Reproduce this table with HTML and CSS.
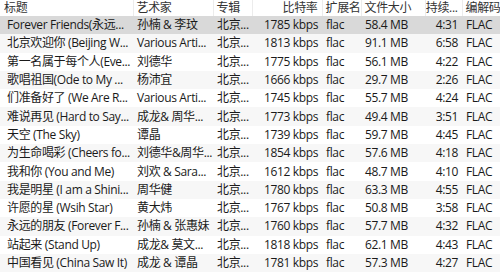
FILE: index.html
```html
<!DOCTYPE html>
<html lang="zh">
<head>
<meta charset="utf-8">
<title>列表</title>
<link rel="stylesheet" href="styles.css">
</head>
<body>
<table class="list">
  <colgroup>
    <col class="c-title"><col class="c-artist"><col class="c-album"><col class="c-rate"><col class="c-ext"><col class="c-size"><col class="c-dur"><col class="c-codec">
  </colgroup>
  <thead>
    <tr class="head">
      <th class="first">标题</th><th>艺术家</th><th>专辑</th><th class="num">比特率</th><th>扩展名</th><th>文件大小</th><th class="num">持续...</th><th>编解码</th>
    </tr>
  </thead>
  <tbody>
    <tr class="sel"><td class="first">Forever Friends(永远...</td><td>孙楠 &amp; 李玟</td><td>北京...</td><td class="num">1785 kbps</td><td>flac</td><td>58.4 MB</td><td class="num">4:31</td><td>FLAC</td></tr>
    <tr><td class="first">北京欢迎你 (Beijing W...</td><td>Various Arti...</td><td>北京...</td><td class="num">1813 kbps</td><td>flac</td><td>91.1 MB</td><td class="num">6:58</td><td>FLAC</td></tr>
    <tr><td class="first">第一名属于每个人(Eve...</td><td>刘德华</td><td>北京...</td><td class="num">1775 kbps</td><td>flac</td><td>56.1 MB</td><td class="num">4:22</td><td>FLAC</td></tr>
    <tr><td class="first">歌唱祖国(Ode to My ...</td><td>杨沛宜</td><td>北京...</td><td class="num">1666 kbps</td><td>flac</td><td>29.7 MB</td><td class="num">2:26</td><td>FLAC</td></tr>
    <tr><td class="first">们准备好了 (We Are R...</td><td>Various Arti...</td><td>北京...</td><td class="num">1745 kbps</td><td>flac</td><td>55.7 MB</td><td class="num">4:24</td><td>FLAC</td></tr>
    <tr><td class="first">难说再见 (Hard to Say...</td><td>成龙&amp; 周华...</td><td>北京...</td><td class="num">1773 kbps</td><td>flac</td><td>49.4 MB</td><td class="num">3:51</td><td>FLAC</td></tr>
    <tr><td class="first">天空 (The Sky)</td><td>谭晶</td><td>北京...</td><td class="num">1739 kbps</td><td>flac</td><td>59.7 MB</td><td class="num">4:45</td><td>FLAC</td></tr>
    <tr><td class="first">为生命喝彩 (Cheers fo...</td><td>刘德华&amp;周华...</td><td>北京...</td><td class="num">1854 kbps</td><td>flac</td><td>57.6 MB</td><td class="num">4:18</td><td>FLAC</td></tr>
    <tr><td class="first">我和你 (You and Me)</td><td>刘欢 &amp; Sara...</td><td>北京...</td><td class="num">1612 kbps</td><td>flac</td><td>48.7 MB</td><td class="num">4:10</td><td>FLAC</td></tr>
    <tr><td class="first">我是明星 (I am a Shini...</td><td>周华健</td><td>北京...</td><td class="num">1780 kbps</td><td>flac</td><td>63.3 MB</td><td class="num">4:55</td><td>FLAC</td></tr>
    <tr><td class="first">许愿的星 (Wsih Star)</td><td>黄大炜</td><td>北京...</td><td class="num">1767 kbps</td><td>flac</td><td>50.8 MB</td><td class="num">3:58</td><td>FLAC</td></tr>
    <tr><td class="first">永远的朋友 (Forever F...</td><td>孙楠 &amp; 张惠妹</td><td>北京...</td><td class="num">1760 kbps</td><td>flac</td><td>57.7 MB</td><td class="num">4:32</td><td>FLAC</td></tr>
    <tr><td class="first">站起来 (Stand Up)</td><td>成龙&amp; 莫文...</td><td>北京...</td><td class="num">1818 kbps</td><td>flac</td><td>62.1 MB</td><td class="num">4:43</td><td>FLAC</td></tr>
    <tr><td class="first">中国看见 (China Saw It)</td><td>成龙 &amp; 谭晶</td><td>北京...</td><td class="num">1781 kbps</td><td>flac</td><td>57.3 MB</td><td class="num">4:27</td><td>FLAC</td></tr>
  </tbody>
</table>
</body>
</html>
```
FILE: styles.css
```css
html, body {
  margin: 0;
  padding: 0;
  background: #ffffff;
  overflow: hidden;
}

.list {
  width: 500px;
  table-layout: fixed;
  border-collapse: collapse;
  font-family: "Open Sans", "Noto Sans CJK SC", sans-serif;
  font-size: 12px;
  letter-spacing: -0.35px;
  color: #1a1a1a;
}

.c-title { width: 133px; }
.c-artist { width: 80px; }
.c-album { width: 39px; }
.c-rate { width: 70px; }
.c-ext { width: 39px; }
.c-size { width: 64px; }
.c-dur { width: 37px; }
.c-codec { width: 38px; }

.list th,
.list td {
  white-space: nowrap;
  overflow: hidden;
  text-align: left;
  padding: 0 0 0 4px;
  line-height: 16px;
}

.list th {
  height: 16px;
  font-weight: normal;
  color: #333333;
  padding-left: 3px;
  border-left: 1px solid #ececec;
}

.list th.first {
  border-left: none;
  padding-left: 4px;
}

.list td {
  height: 18.3px;
  padding-top: 0;
  padding-bottom: 0;
}

.list td.first {
  padding-left: 7px;
}

.list .num {
  text-align: right;
  padding-left: 0;
  padding-right: 4px;
}

.list tbody tr:nth-child(even) {
  background: #f7f7f7;
}

.list tbody tr.sel {
  background: #d9d9d9;
}
```
